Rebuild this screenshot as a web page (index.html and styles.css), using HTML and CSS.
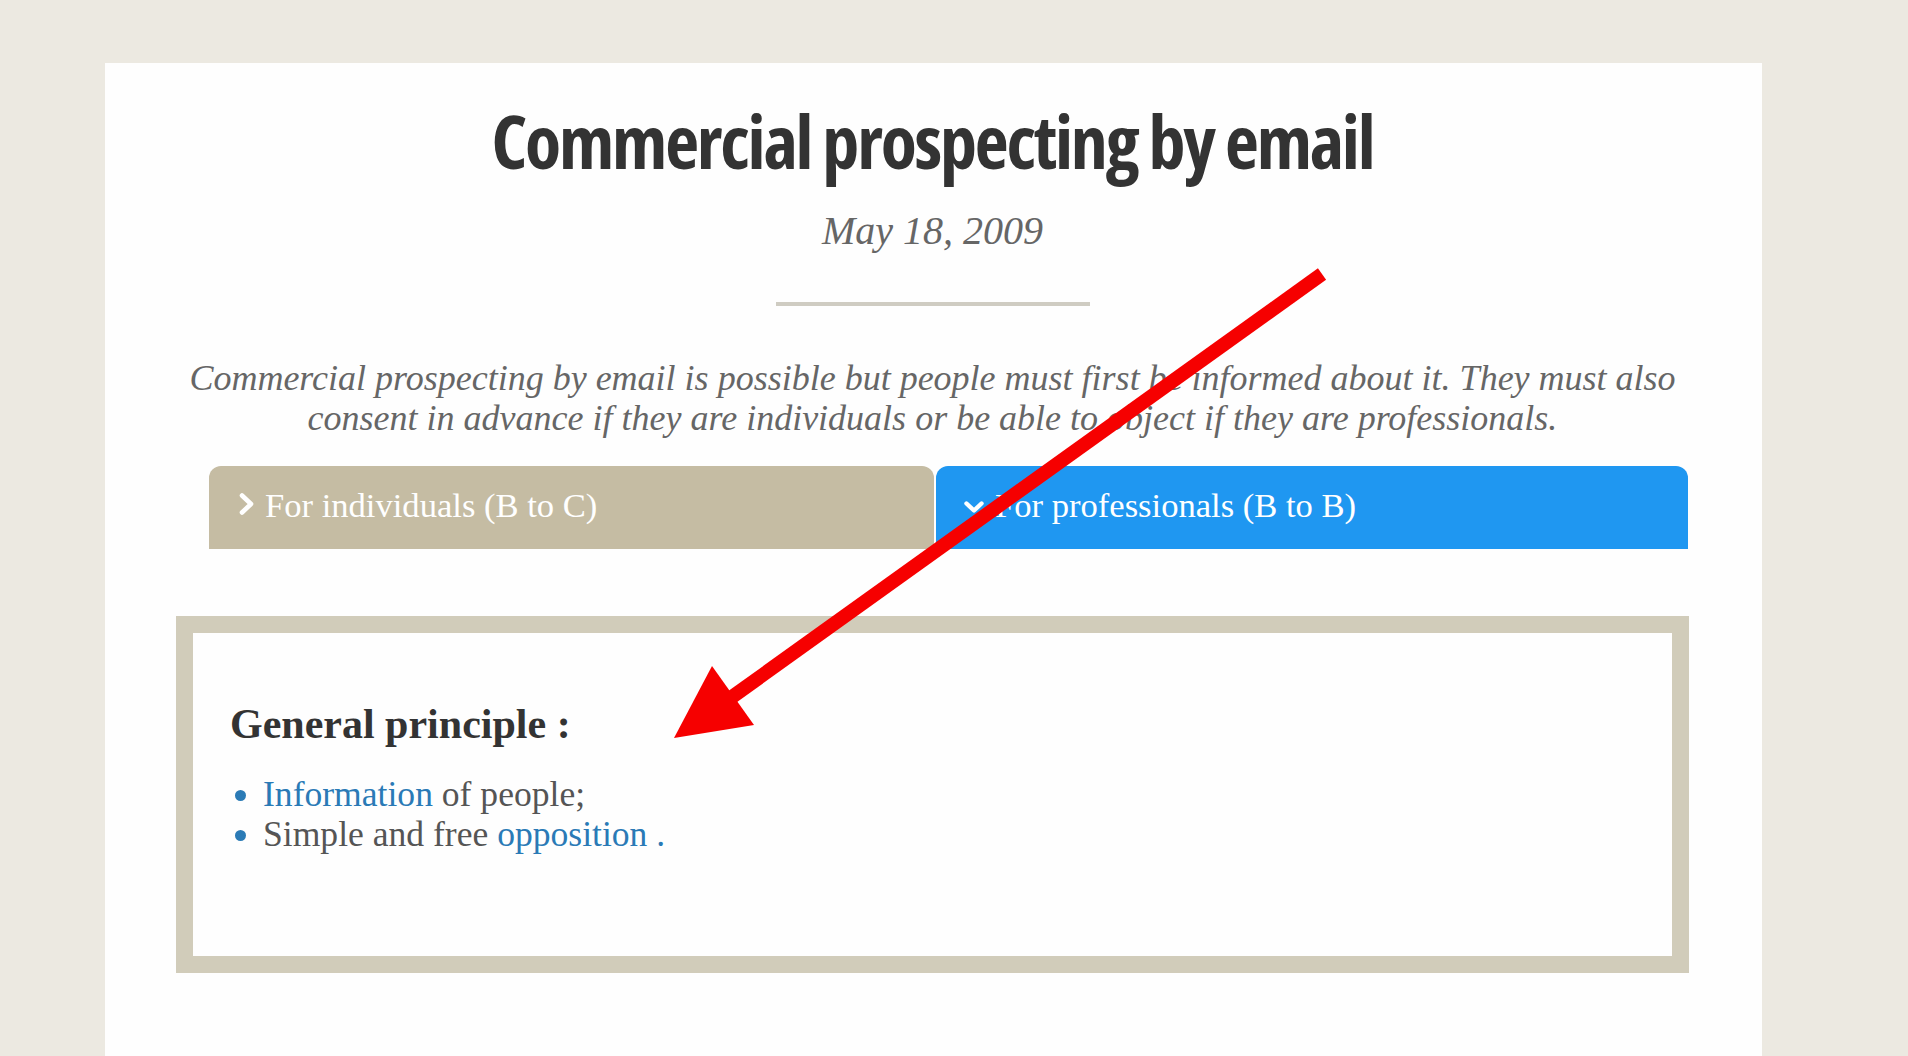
FILE: index.html
```html
<!DOCTYPE html>
<html lang="en">
<head>
<meta charset="utf-8">
<title>Commercial prospecting by email</title>
<link rel="stylesheet" href="styles.css">
</head>
<body>
<main class="card">
  <h1 class="title">Commercial prospecting by email</h1>
  <p class="date">May 18, 2009</p>
  <hr class="divider">
  <p class="intro">Commercial prospecting by email is possible but people must first be informed about it. They must also<br>consent in advance if they are individuals or be able to object if they are professionals.</p>
  <div class="tabs">
    <div class="tab tab-b2c">
      <svg class="chev" width="17" height="24" viewBox="0 0 17 24"><path d="M4 3.5 L13 12 L4 20.5" fill="none" stroke="#fff" stroke-width="4.6" stroke-linecap="round" stroke-linejoin="round"/></svg>
      <span>For individuals (B to C)</span>
    </div>
    <div class="tab tab-b2b">
      <svg class="chev chev-down" width="22" height="14" viewBox="0 0 22 14"><path d="M3.5 3.5 L11 10.5 L18.5 3.5" fill="none" stroke="#fff" stroke-width="4.4" stroke-linecap="round" stroke-linejoin="round"/></svg>
      <span>For professionals (B to B)</span>
    </div>
  </div>
  <section class="panel">
    <h2 class="panel-title">General principle :</h2>
    <ul class="points">
      <li><a href="#">Information</a> of people;</li>
      <li>Simple and free <a href="#">opposition</a> <a href="#">.</a></li>
    </ul>
  </section>
</main>
<svg class="arrow" width="1908" height="1056" viewBox="0 0 1908 1056">
  <line x1="1322" y1="274" x2="725" y2="702" stroke="#f60000" stroke-width="14"/>
  <polygon points="674,738 712,666 754,725" fill="#f60000"/>
</svg>
</body>
</html>
```
FILE: styles.css
```css
html, body {
  margin: 0;
  padding: 0;
}
body {
  background: #ece9e1;
  font-family: "Liberation Serif", "DejaVu Serif", serif;
  color: #555;
}
.card {
  margin: 63px 146px 0 105px;
  padding: 32px 73px 40px 71px;
  background: #fefefe;
  min-height: calc(100vh - 63px);
  box-sizing: border-box;
}
.title {
  margin: 0;
  text-align: center;
  font-family: "Open Sans", "Liberation Sans", sans-serif;
  font-weight: 700;
  font-stretch: 75%;
  font-size: 74px;
  line-height: 91px;
  color: #333;
  letter-spacing: -2.2px;
}
.date {
  margin: 22px 0 0;
  text-align: center;
  font-style: italic;
  font-size: 40px;
  line-height: 46px;
  color: #666;
}
.divider {
  margin: 48px auto 0;
  width: 314px;
  height: 4px;
  border: 0;
  background: #cfccc2;
}
.intro {
  margin: 52px 0 0;
  text-align: center;
  font-style: italic;
  font-size: 36px;
  line-height: 40px;
  color: #666;
}
.tabs {
  margin: 28px 1px 0 33px;
  display: grid;
  grid-template-columns: 725px 752px;
  column-gap: 2px;
}
.tab {
  height: 83px;
  box-sizing: border-box;
  padding: 0 0 4px 29px;
  display: flex;
  align-items: center;
  gap: 10px;
  border-radius: 12px 12px 0 0;
  color: #fff;
  font-size: 34.6px;
}
.tab-b2c {
  background: #c5bca3;
}
.tab-b2b {
  background: #1f97f1;
  padding-left: 27px;
  gap: 10px;
}
.chev {
  flex: none;
  margin-top: -4px;
}
.chev-down {
  margin-top: 2px;
}
.panel {
  margin-top: 67px;
  height: 357px;
  box-sizing: border-box;
  border: 17px solid #d1ccba;
  padding: 66px 37px 0;
  background: #fefefe;
}
.panel-title {
  margin: 0;
  font-size: 42px;
  line-height: 50px;
  font-weight: 700;
  color: #333;
}
.points {
  margin: 25px 0 0;
  padding: 0 0 0 33px;
  font-size: 35.6px;
  line-height: 40px;
  color: #555;
}
.points li::marker {
  color: #2b7bb6;
}
.points a {
  color: #2a7ab6;
  text-decoration: none;
}
.arrow {
  position: absolute;
  top: 0;
  left: 0;
  pointer-events: none;
}
```
